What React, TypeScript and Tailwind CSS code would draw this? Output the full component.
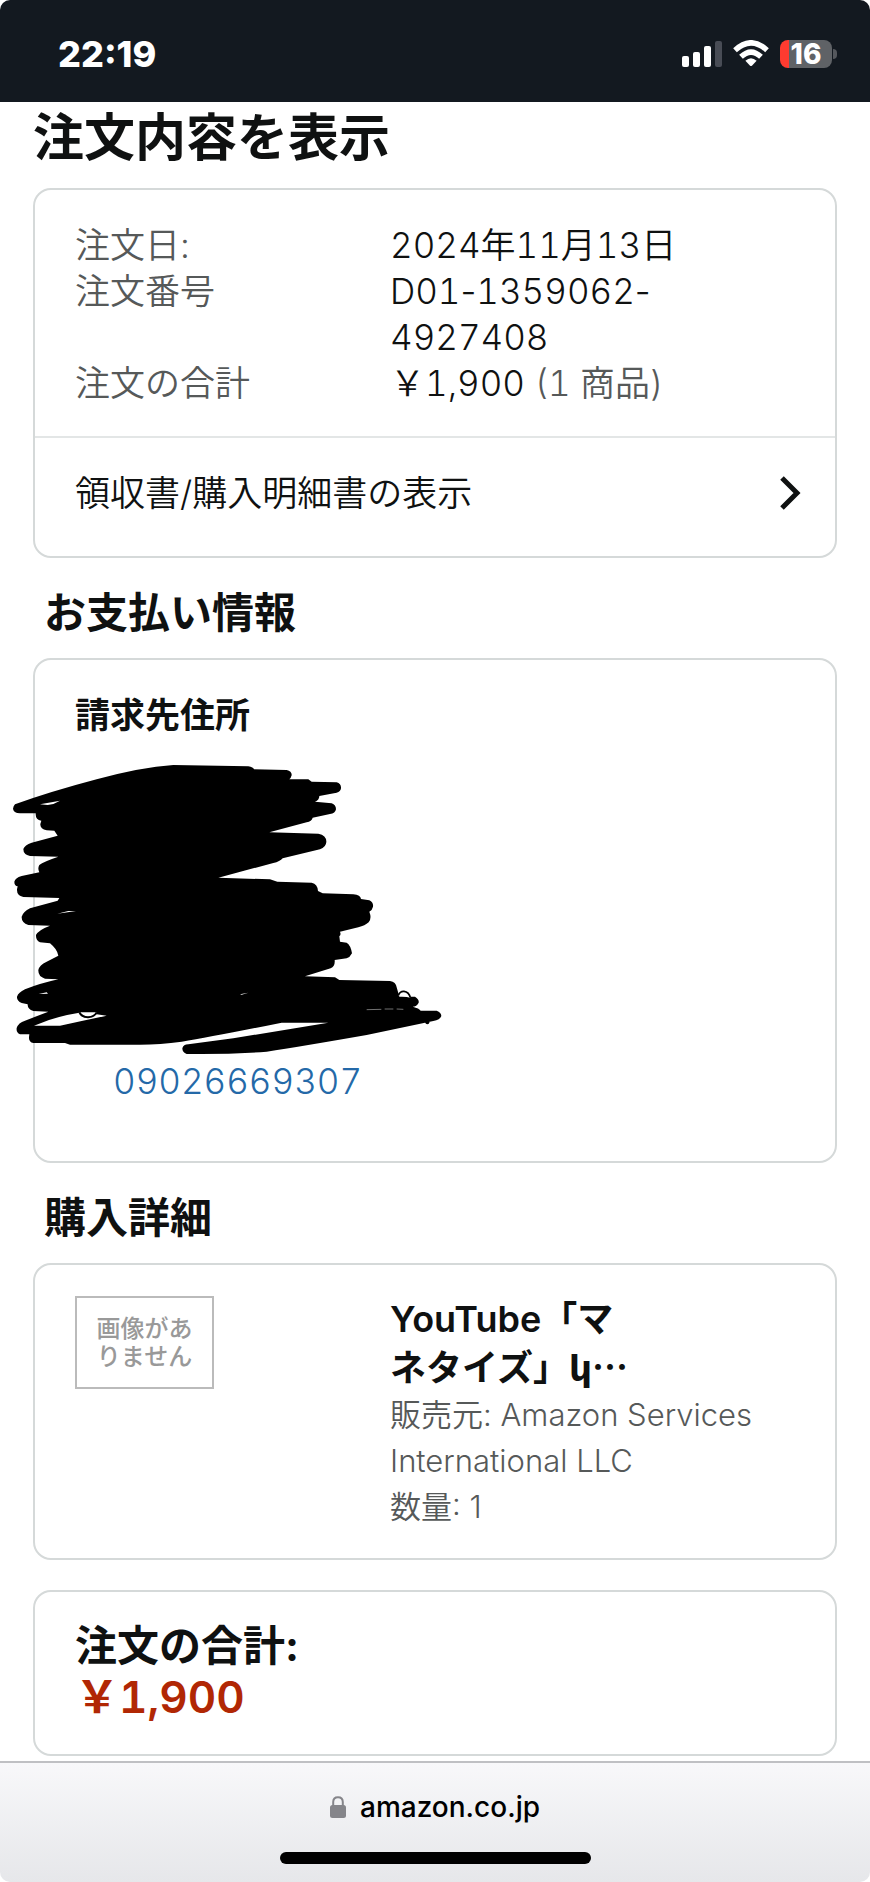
import React from 'react';

function StatusBar() {
  return (
    <header className="bg-white">
      <div className="h-[102px] rounded-t-[10px] bg-[#131920] px-8 text-white">
        <div className="flex h-full items-center justify-between pl-[26px] pr-px pt-[5px]">
          <time className="text-[36px] font-extrabold leading-none">22:19</time>
          <div className="flex items-center gap-[11px]">
            <svg width="40" height="26" viewBox="0 0 40 26" fill="white">
              <rect x="0" y="15" width="7" height="11" rx="2" />
              <rect x="11" y="11" width="7" height="15" rx="2" />
              <rect x="22" y="5" width="7" height="21" rx="2" />
              <rect x="33" y="0" width="7" height="26" rx="2" fill="#484c55" />
            </svg>
            <svg width="36" height="27" viewBox="0 0 36 27" fill="none" stroke="white" strokeWidth="5.4">
              <path d="M2 10.2 Q18 -4.6 34 10.2" />
              <path d="M8 16.8 Q18 7.4 28 16.8" />
              <path d="M12.4 20.8 Q18 15.6 23.6 20.8 L18.9 25.7 Q18 26.4 17.1 25.7Z" fill="white" stroke="none" />
            </svg>
            <div className="flex items-center gap-px">
              <div className="flex h-7 w-[52px] items-center justify-center rounded-lg bg-[linear-gradient(to_right,#ff3b30_9px,#5f6266_9px)] text-[28px] font-extrabold leading-none">
                16
              </div>
              <div className="h-[10px] w-1 rounded-r-full bg-[#55585d]" />
            </div>
          </div>
        </div>
      </div>
    </header>
  );
}

function Card({ children }: { children: React.ReactNode }) {
  return <div className="relative rounded-[18px] border-2 border-[#d5d9d9] bg-white">{children}</div>;
}

function SectionTitle({ children }: { children: React.ReactNode }) {
  return <h2 className="px-[11px] pb-[15px] pt-[25px] text-[42px] font-bold leading-[60px]">{children}</h2>;
}

function Scribble() {
  return (
    <svg
      className="pointer-events-none absolute -left-[35px] top-[90px]"
      width="450"
      height="310"
      viewBox="0 0 1350 930"
      aria-hidden="true"
    >
      <path d="M45 163 Q150 125 290 88 Q420 52 520 45 L745 49 Q760 52 762 58 L860 60 Q876 64 875 76 Q873 84 868 88 L925 88 L935 95 L1010 97 Q1024 101 1023 115 Q1022 125 1010 128 L958 138 Q958 150 945 155 L995 160 Q1008 165 1008 178 Q1006 190 990 192 L938 203 Q935 214 920 217 L808 247 L955 251 Q980 256 979 276 Q978 292 960 298 L848 325 Q840 335 820 339 L655 383 L810 388 L832 395 L935 398 Q953 402 954 423 L968 430 L1060 433 Q1082 435 1083 447 L1108 451 Q1121 458 1119 470 Q1117 480 1108 485 Q1116 505 1106 517 Q1095 527 1075 532 L1020 545 Q1024 555 1018 559 L1020 575 L1040 578 Q1052 585 1056 610 Q1050 622 1040 625 L1004 630 Q1006 648 992 655 L915 679 L1005 682 L1018 690 L1170 693 Q1188 696 1190 712 L1198 740 L1245 740 Q1258 748 1256 758 Q1250 770 1238 770 Q1258 775 1262 782 L1310 782 Q1324 788 1324 798 Q1320 810 1300 813 L1100 855 Q900 890 800 905 Q680 914 560 912 Q547 908 547 895 Q550 883 565 883 L700 865 L985 818 L845 818 Q640 860 545 875 Q480 884 420 884 L210 884 L195 879 L100 879 Q86 876 87 862 L88 853 L60 853 Q48 848 50 834 Q55 818 75 812 L145 785 L100 783 Q82 778 83 763 L65 759 Q50 752 51 740 Q55 728 75 718 Q120 700 175 688 L135 686 Q114 680 115 660 Q118 645 140 635 L175 617 Q172 598 150 580 L120 577 Q107 570 108 555 Q115 540 150 527 L85 525 Q64 518 65 500 Q70 485 90 475 L173 452 L178 444 L70 441 Q50 436 51 418 L53 409 Q43 408 43 395 Q45 384 65 378 L118 367 Q112 355 118 345 Q130 335 175 320 L90 318 Q70 314 70 297 Q74 285 95 278 L173 257 L163 242 L140 241 Q120 236 121 222 L124 212 Q106 210 107 190 L60 190 Q40 188 39 176 Q40 168 45 163Z" />
      <g fill="white">
        <path d="M120 163 L180 152 Q165 162 143 165Z" />
        <path d="M102 827 Q170 798 238 788 L285 792 L320 797 Q245 813 180 827Z" />
        <path d="M172 491 L205 483 L228 483Z" />
        <path d="M116 732 L140 727 L144 731Z" />
        <path d="M720 733 L745 728 L725 734Z" />
      </g>
      <path d="M238 787 Q246 802 264 802 Q284 800 290 787" fill="white" stroke="black" strokeWidth="6" />
      <path d="M1195 736 Q1200 723 1212 724 Q1227 726 1231 743" fill="white" stroke="black" strokeWidth="5" />
      <path d="M1100 779 L1144 778 M1154 777 L1180 777 M1190 777 L1210 778" stroke="#aaa" strokeWidth="2" />
      <circle cx="1282" cy="817" r="6" />
    </svg>
  );
}

export default function App() {
  return (
    <div
      lang="ja"
      className="flex min-h-screen flex-col bg-white font-['Inter','Noto_Sans_CJK_JP',sans-serif] text-[35px] leading-[46px] text-[#0f1111]"
    >
      <StatusBar />

      <main className="px-[33px] pb-1">
        <h1 className="pb-4 pt-[2px] text-[51px] font-bold leading-[68px]">注文内容を表示</h1>

        <Card>
          <dl className="grid grid-cols-[315px_1fr] px-10 pb-[30px] pt-8 font-[350]">
            <dt className="text-[#565959]">注文日:</dt>
            <dd className="tabular-nums">2024年11月13日</dd>
            <dt className="text-[#565959]">注文番号</dt>
            <dd className="tabular-nums">
              D01<span className="normal-nums">-</span>1359062<span className="normal-nums">-</span>
              <br />
              4927408
            </dd>
            <dt className="text-[#565959]">注文の合計</dt>
            <dd className="tabular-nums">
              ￥1,900 <span className="text-[#565959]">(1 商品)</span>
            </dd>
          </dl>
          <a
            href="#receipt"
            className="flex items-center justify-between border-t-2 border-[#e3e6e6] pb-10 pl-10 pr-[34px] pt-8 font-[350]"
          >
            領収書/購入明細書の表示
            <svg width="21" height="34" viewBox="0 0 21 34" fill="none" stroke="#0f1111" strokeWidth="5">
              <path d="M2 2 L17 17 L2 32" />
            </svg>
          </a>
        </Card>

        <SectionTitle>お支払い情報</SectionTitle>
        <Card>
          <div className="px-10 pb-[57px] pt-8">
            <h3 className="font-bold">請求先住所</h3>
            <address className="pl-[38px] pt-[320px] font-[350] not-italic">
              <a href="tel:09026669307" className="tabular-nums text-[#2469a8]">
                09026669307
              </a>
            </address>
          </div>
          <Scribble />
        </Card>

        <SectionTitle>購入詳細</SectionTitle>
        <Card>
          <div className="grid grid-cols-[315px_1fr] pb-7 pl-10 pr-4 pt-[31px]">
            <div className="flex h-[93px] w-[139px] flex-col items-center justify-center border-2 border-[#bbb] text-[24px] font-medium leading-[28px] text-[#999]">
              <p>画像があ</p>
              <p>りません</p>
            </div>
            <div className="text-[31px] font-[350] text-[#565959]">
              <h3 className="text-[36px] font-semibold text-[#0f1111]">
                YouTube「マ
                <br />
                ネタイズ」
                <span className="font-['DejaVu_Sans']">կ</span>
                <span className="font-['Noto_Sans_CJK_JP']">…</span>
              </h3>
              <p>
                販売元: Amazon Services
                <br />
                International LLC
              </p>
              <p>数量: 1</p>
            </div>
          </div>
        </Card>

        <div className="pt-[30px]">
          <Card>
            <div className="px-10 pb-8 pt-7">
              <h2 className="text-[42px] font-bold leading-[52px]">注文の合計:</h2>
              <p className="text-[44px] font-semibold leading-[50px] tabular-nums text-[#b12704]">￥1,900</p>
            </div>
          </Card>
        </div>
      </main>

      <footer className="mt-auto bg-white">
        <div className="flex flex-col items-center rounded-b-[10px] border-t-2 border-[#bfc0c3] bg-gradient-to-b from-[#f8f8fa] to-[#e6e7ea] pb-[18px] pt-[21px]">
          <div className="flex items-center gap-[14px] pb-[22px]">
            <svg width="16" height="22" viewBox="0 0 16 22">
              <rect x="0" y="9" width="16" height="13" rx="2.5" fill="#85858a" />
              <path d="M3.2 10 V6 Q3.2 1.2 8 1.2 Q12.8 1.2 12.8 6 V10" fill="none" stroke="#85858a" strokeWidth="2" />
            </svg>
            <span className="text-[28px] font-medium text-black">amazon.co.jp</span>
          </div>
          <div className="h-3 w-[311px] rounded-full bg-black" />
        </div>
      </footer>
    </div>
  );
}
